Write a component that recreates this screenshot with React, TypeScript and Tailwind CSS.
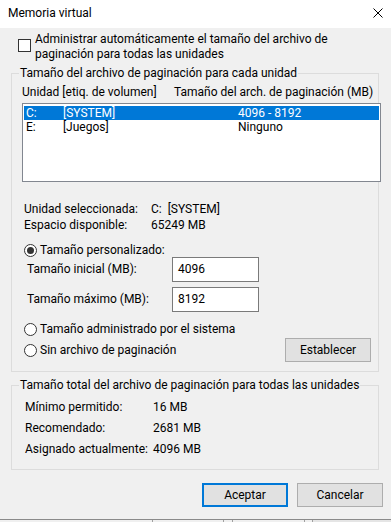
function Radio({ checked }: { checked?: boolean }) {
  return (
    <div className="w-[13px] h-[13px] rounded-full border border-[#333333] bg-white flex items-center justify-center shrink-0">
      {checked ? <div className="w-[7px] h-[7px] rounded-full bg-[#333333]" /> : null}
    </div>
  );
}

export default function App() {
  return (
    <div className="w-[391px] h-[522px] bg-[#f0f0f0] flex flex-col overflow-hidden font-['Roboto',sans-serif] text-[12px] leading-[15px] text-black">
      {/* Title bar */}
      <div className="h-[28px] shrink-0 bg-white flex items-start justify-between pl-[8px] pr-[8px] pt-[6px]">
        <span>Memoria virtual</span>
        <svg width="10" height="10" viewBox="0 0 10 10" className="mt-[2px]">
          <path d="M0.5 0.5 L9.5 9.5 M9.5 0.5 L0.5 9.5" stroke="#000" strokeWidth="1" fill="none" />
        </svg>
      </div>

      {/* Checkbox */}
      <div className="flex pl-[18px] pt-[4px]">
        <div className="w-[13px] h-[13px] border border-[#333333] bg-white mt-[7px] shrink-0" />
        <div className="ml-[4px]">
          Administrar automáticamente el tamaño del archivo de
          <br />
          paginación para todas las unidades
        </div>
      </div>

      {/* Group 1 */}
      <fieldset className="mt-[4px] ml-[11px] w-[368px] min-w-0 border border-[#dcdcdc]">
        <legend className="ml-[7px] px-[1px] leading-[15px]">Tamaño del archivo de paginación para cada unidad</legend>
        <div className="pl-[10px] pb-[9px]">
          <div className="flex mt-[4px]">
            <div className="w-[152px]">Unidad [etiq. de volumen]</div>
            <div>Tamaño del arch. de paginación (MB)</div>
          </div>
          <div className="mt-[3px] w-[359px] h-[79px] border border-[#828790] bg-white px-[1px] pt-[2px]">
            <div className="h-[14px] leading-[14px] flex bg-[#0078d7] text-white pl-[2px]">
              <div className="w-[37px]">C:</div>
              <div className="w-[175px]">[SYSTEM]</div>
              <div>4096 - 8192</div>
            </div>
            <div className="h-[14px] leading-[14px] flex pl-[2px]">
              <div className="w-[37px]">E:</div>
              <div className="w-[175px]">[Juegos]</div>
              <div>Ninguno</div>
            </div>
          </div>

          <div className="mt-[19px] ml-[2px] leading-[16px]">
            <div className="flex">
              <div className="w-[127px]">Unidad seleccionada:</div>
              <div>C:&nbsp;&nbsp;[SYSTEM]</div>
            </div>
            <div className="flex">
              <div className="w-[127px]">Espacio disponible:</div>
              <div>65249 MB</div>
            </div>
          </div>

          <div className="mt-[10px] ml-[2px] h-[14px] flex items-center">
            <Radio checked />
            <span className="ml-[3px]">Tamaño personalizado:</span>
          </div>

          <div className="ml-[5px] h-[25px] flex items-center">
            <div className="w-[145px]">Tamaño inicial (MB):</div>
            <div className="w-[87px] h-[25px] border border-[#7a7a7a] bg-white pl-[5px] flex items-center">4096</div>
          </div>
          <div className="mt-[5px] ml-[5px] h-[25px] flex items-center">
            <div className="w-[145px]">Tamaño máximo (MB):</div>
            <div className="w-[87px] h-[25px] border border-[#7a7a7a] bg-white pl-[5px] flex items-center">8192</div>
          </div>

          <div className="mt-[10px] ml-[2px] h-[14px] flex items-center">
            <Radio />
            <span className="ml-[3px]">Tamaño administrado por el sistema</span>
          </div>

          <div className="mt-[2px] ml-[2px] w-[347px] h-[24px] flex items-center">
            <Radio />
            <span className="ml-[3px]">Sin archivo de paginación</span>
            <div className="ml-auto w-[86px] h-[24px] border border-[#adadad] bg-[#e1e1e1] flex items-center justify-center">
              Establecer
            </div>
          </div>
        </div>
      </fieldset>

      {/* Group 2 */}
      <fieldset className="mt-[6px] ml-[11px] w-[368px] min-w-0 border border-[#dcdcdc]">
        <legend className="ml-[7px] px-[1px] leading-[15px]">Tamaño total del archivo de paginación para todas las unidades</legend>
        <div className="pl-[13px] pb-[9px] mt-[4px] leading-[21px]">
          <div className="flex">
            <div className="w-[128px]">Mínimo permitido:</div>
            <div>16 MB</div>
          </div>
          <div className="flex">
            <div className="w-[128px]">Recomendado:</div>
            <div>2681 MB</div>
          </div>
          <div className="flex">
            <div className="w-[128px]">Asignado actualmente:</div>
            <div>4096 MB</div>
          </div>
        </div>
      </fieldset>

      {/* Buttons */}
      <div className="mt-[13px] flex justify-end gap-[9px] pr-[8px]">
        <div className="w-[86px] h-[24px] border-2 border-[#0078d7] bg-[#e1e1e1] flex items-center justify-center">
          Aceptar
        </div>
        <div className="w-[86px] h-[24px] border border-[#adadad] bg-[#e1e1e1] flex items-center justify-center">
          Cancelar
        </div>
      </div>

      {/* Bottom edge */}
      <div className="mt-auto h-[3px] border-t border-[#8a8a8a] flex">
        <div className="w-[153px] border-r border-[#a0a0a0]" />
        <div className="w-[71px] border-r border-[#a0a0a0]" />
        <div className="w-[9px] border-r border-[#a0a0a0]" />
        <div className="w-[72px] border-r border-[#a0a0a0]" />
        <div className="w-[8px] border-r border-[#a0a0a0]" />
        <div className="flex-1 bg-[#e5e5e5]" />
      </div>
    </div>
  );
}
